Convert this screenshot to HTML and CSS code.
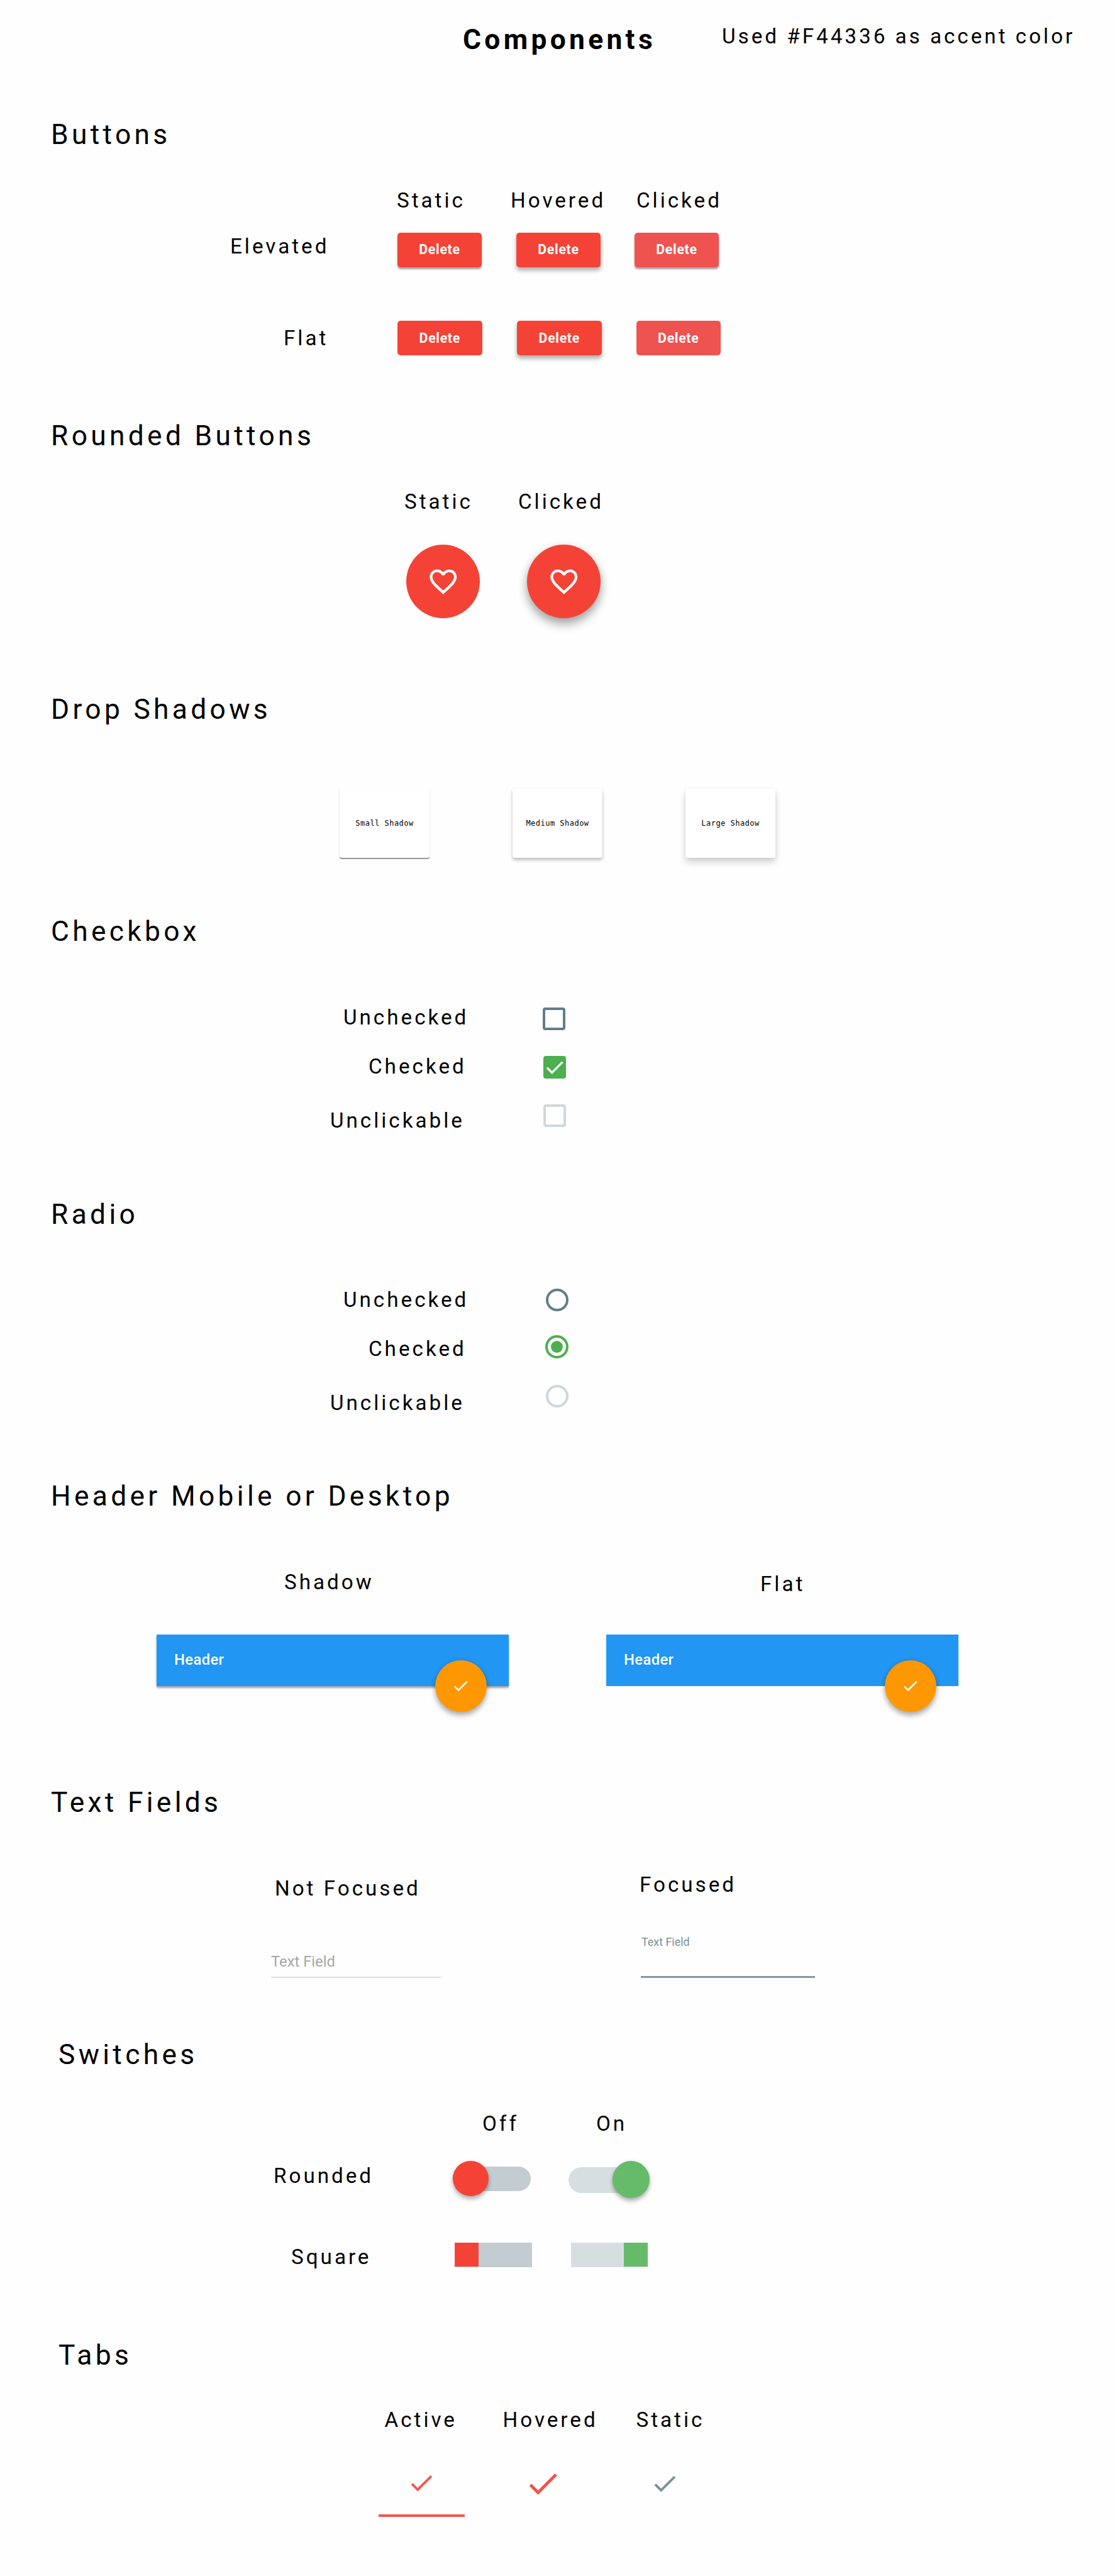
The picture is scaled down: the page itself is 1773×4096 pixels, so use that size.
FILE: index.html
```html
<!DOCTYPE html>
<html lang="en">
<head>
<meta charset="utf-8">
<title>Components</title>
<link rel="stylesheet" href="styles.css">
</head>
<body>
<svg class="sprite" aria-hidden="true">
  <symbol id="check" viewBox="0 0 24 24"><path d="M9 16.17L4.83 12l-1.42 1.41L9 19 21 7l-1.41-1.41z"/></symbol>
  <symbol id="heart" viewBox="0 0 24 24"><path d="M16.5 3c-1.74 0-3.41.81-4.5 2.09C10.91 3.81 9.24 3 7.5 3 4.42 3 2 5.42 2 8.5c0 3.78 3.4 6.86 8.55 11.54L12 21.35l1.45-1.32C18.6 15.36 22 12.28 22 8.5 22 5.42 19.58 3 16.5 3zm-4.4 15.55l-.1.1-.1-.1C7.14 14.24 4 11.39 4 8.5 4 6.5 5.5 5 7.5 5c1.54 0 3.04.99 3.57 2.36h1.87C13.46 5.99 14.96 5 16.5 5c2 0 3.5 1.5 3.5 3.5 0 2.89-3.14 5.74-7.9 10.05z"/></symbol>
</svg>

<header class="page-head">
  <h1 class="title">Components</h1>
  <p class="label note">Used #F44336 as accent color</p>
</header>

<section class="section buttons">
  <h2 class="heading">Buttons</h2>
  <div class="grid">
    <span></span>
    <span class="label">Static</span>
    <span class="label">Hovered</span>
    <span class="label">Clicked</span>
    <span class="label elevated-label">Elevated</span>
    <button class="btn elevated">Delete</button>
    <button class="btn elevated hovered">Delete</button>
    <button class="btn elevated clicked">Delete</button>
    <span class="label flat-label">Flat</span>
    <button class="btn flat">Delete</button>
    <button class="btn flat hovered">Delete</button>
    <button class="btn flat clicked">Delete</button>
  </div>
</section>

<section class="section rounded">
  <h2 class="heading">Rounded Buttons</h2>
  <div class="grid">
    <span class="label">Static</span>
    <span class="label">Clicked</span>
    <button class="round"><svg class="heart"><use href="#heart"/></svg></button>
    <button class="round raised"><svg class="heart"><use href="#heart"/></svg></button>
  </div>
</section>

<section class="section shadows">
  <h2 class="heading">Drop Shadows</h2>
  <div class="cards">
    <div class="card small">Small Shadow</div>
    <div class="card medium">Medium Shadow</div>
    <div class="card large">Large Shadow</div>
  </div>
</section>

<section class="section options checkboxes">
  <h2 class="heading">Checkbox</h2>
  <div class="grid">
    <span class="label unchecked-label">Unchecked</span>
    <span class="box"></span>
    <span class="label checked-label">Checked</span>
    <span class="box checked"><svg class="tick" viewBox="3 3 18 18"><path d="M6 12.4l3.9 3.9 8.4-8.5"/></svg></span>
    <span class="label unclickable-label">Unclickable</span>
    <span class="box disabled"></span>
  </div>
</section>

<section class="section options radios">
  <h2 class="heading">Radio</h2>
  <div class="grid">
    <span class="label unchecked-label">Unchecked</span>
    <span class="radio"></span>
    <span class="label checked-label">Checked</span>
    <span class="radio checked"></span>
    <span class="label unclickable-label">Unclickable</span>
    <span class="radio disabled"></span>
  </div>
</section>

<section class="section headers">
  <h2 class="heading">Header Mobile or Desktop</h2>
  <div class="grid">
    <span class="label shadow-label">Shadow</span>
    <span class="label flat-label">Flat</span>
    <div class="bar shadowed">Header<button class="fab"><svg class="fab-icon"><use href="#check"/></svg></button></div>
    <div class="bar">Header<button class="fab"><svg class="fab-icon"><use href="#check"/></svg></button></div>
  </div>
</section>

<section class="section fields">
  <h2 class="heading">Text Fields</h2>
  <div class="grid">
    <span class="label blurred-label">Not Focused</span>
    <span class="label focused-label">Focused</span>
    <div class="field">Text Field</div>
    <div class="field focused">Text Field</div>
  </div>
</section>

<section class="section inset switches">
  <h2 class="heading">Switches</h2>
  <div class="grid">
    <span></span>
    <span class="label off-label">Off</span>
    <span class="label on-label">On</span>
    <span class="label rounded-label">Rounded</span>
    <span class="pill off"><i class="thumb"></i></span>
    <span class="pill on"><i class="thumb"></i></span>
    <span class="label square-label">Square</span>
    <span class="slab off"><i class="thumb"></i></span>
    <span class="slab on"><i class="thumb"></i></span>
  </div>
</section>

<section class="section inset tabs">
  <h2 class="heading">Tabs</h2>
  <div class="grid">
    <span class="label">Active</span>
    <span class="label">Hovered</span>
    <span class="label">Static</span>
    <span class="tab active"><svg><use href="#check"/></svg></span>
    <span class="tab hovered"><svg><use href="#check"/></svg></span>
    <span class="tab"><svg><use href="#check"/></svg></span>
  </div>
</section>
</body>
</html>
```

FILE: styles.css
```css
* { box-sizing: border-box; }

body {
  margin: 0;
  width: 1773px;
  height: 4096px;
  overflow: hidden;
  background: #fefefe;
  color: #000;
  font-family: Roboto, "Liberation Sans", sans-serif;
}

.sprite { display: none; }

button {
  padding: 0;
  border: 0;
  font-family: inherit;
}

/* Type */
.title, .heading, .label { margin: 0; white-space: nowrap; }
.title, .heading {
  font-size: 44.33px;
  line-height: 52px;
  letter-spacing: 5.32px;
}
.title { font-weight: 700; }
.heading { font-weight: 400; padding-left: 81px; }
.label {
  padding-left: 1px;
  font-size: 33.24px;
  line-height: 41px;
  letter-spacing: 3.98px;
}

/* Sections */
.page-head {
  display: flex;
  height: 188px;
  padding: 37px 0 0 736px;
}
.page-head .title { width: 411px; }

.section { display: flex; flex-direction: column; }
.inset .heading { padding-left: 93px; }
.grid { display: grid; align-items: start; justify-items: start; }

/* Buttons */
.buttons { height: 479px; }
.buttons .grid {
  padding: 58px 0 0 365px;
  grid-template-columns: 265px 181px 200px 200px;
  grid-template-rows: 72px 140px 60px;
}
.elevated-label { margin-top: 1px; }
.buttons .flat-label { margin: 7px 0 0 85px; }
.btn {
  width: 134px;
  height: 54.5px;
  border-radius: 5px;
  background: #f44336;
  color: #fff;
  font-size: 21.3px;
  font-weight: 700;
  line-height: 54px;
  letter-spacing: 0.7px;
  margin-left: 2px;
}
.btn.flat { width: 134.6px; height: 55px; }
.btn.elevated { box-shadow: 0 3px 3px rgba(0, 0, 0, 0.36); }
.btn.hovered { margin-left: 10px; box-shadow: 0 5px 7px rgba(0, 0, 0, 0.32); }
.btn.flat.hovered { margin-left: 11px; }
.btn.clicked { margin-left: -2px; background: #ef5350; }
.btn.flat.clicked { margin-left: 0.5px; }

/* Rounded buttons */
.rounded { height: 435px; }
.rounded .grid {
  padding: 58px 0 0 642px;
  grid-template-columns: 181px 180px;
  grid-template-rows: 89px 117px;
}
.round {
  display: grid;
  place-items: center;
  width: 117px;
  height: 117px;
  margin-left: 4px;
  border-radius: 50%;
  background: #f44336;
}
.round.raised {
  margin-left: 15px;
  box-shadow: 0 10px 16px rgba(0, 0, 0, 0.3), 0 2px 14px rgba(0, 0, 0, 0.12);
}
.heart { width: 51.5px; height: 51.5px; fill: #fff; }

/* Drop shadows */
.shadows { height: 353px; }
.cards { display: flex; gap: 132px; padding: 100px 0 0 540px; }
.card {
  width: 143px;
  height: 110px;
  border-radius: 3px;
  background: #fff;
  font-family: "DejaVu Sans Mono", "Liberation Mono", monospace;
  font-size: 12px;
  line-height: 111px;
  letter-spacing: 0.48px;
  text-align: center;
}
.card.small { box-shadow: 0 1.5px 1px rgba(0, 0, 0, 0.38), 0 1px 2px rgba(0, 0, 0, 0.12); }
.card.medium { box-shadow: 0 4px 5px rgba(0, 0, 0, 0.2), 0 1px 4px rgba(0, 0, 0, 0.1); }
.card.large { box-shadow: 0 7px 11px rgba(0, 0, 0, 0.18), 0 0 5px rgba(0, 0, 0, 0.06); }

/* Checkbox and radio */
.options .grid {
  padding: 90px 0 0 524px;
  grid-template-columns: 340px 40px;
}
.checkboxes { height: 450px; }
.checkboxes .grid { grid-template-rows: 78px 86px 40px; }
.radios { height: 448px; }
.radios .grid { padding-top: 89px; grid-template-rows: 78px 86px 40px; }
.unchecked-label { margin-left: 21px; }
.checked-label { margin-left: 61px; }

.box {
  width: 36px;
  height: 36px;
  margin: 4.5px 0 0 -1px;
  border: 4px solid #607d8b;
  border-radius: 4px;
}
.box.checked { margin: 4px 0 0; border: 0; background: #4caf50; }
.box.disabled { margin: -5px 0 0; border-color: #cfd8dc; }
.tick {
  display: block;
  width: 36px;
  height: 36px;
  fill: none;
  stroke: #fff;
  stroke-width: 1.7;
}

.radio {
  display: grid;
  place-items: center;
  width: 36px;
  height: 36px;
  margin: 2.7px 0 0 3.8px;
  border: 4px solid #607d8b;
  border-radius: 50%;
}
.radio.checked {
  width: 37px;
  height: 37px;
  margin: -1px 0 0 3.3px;
  border-color: #4caf50;
}
.radio.checked::before {
  content: "";
  width: 19px;
  height: 19px;
  border-radius: 50%;
  background: #4caf50;
}
.radio.disabled { margin-top: -8.5px; border-color: #cfd8dc; }

/* Header bars */
.headers { height: 487px; }
.headers .grid {
  padding: 90px 0 0 249px;
  grid-template-columns: 715px 560px;
  grid-template-rows: 104px 82px;
}
.shadow-label { margin-left: 202px; }
.headers .flat-label { margin: 3px 0 0 244px; }
.bar {
  position: relative;
  width: 560px;
  height: 82px;
  padding-left: 28px;
  background: #2196f3;
  color: #fff;
  font-size: 23.8px;
  font-weight: 500;
  line-height: 81px;
  letter-spacing: 0.4px;
}
.bar.shadowed { box-shadow: 0 3px 3px rgba(0, 0, 0, 0.36); }
/* The action button straddles the lower edge of the bar */
.fab {
  position: absolute;
  right: 35px;
  bottom: -41px;
  display: grid;
  place-items: center;
  width: 82px;
  height: 82px;
  border-radius: 50%;
  background: #ff9800;
  box-shadow: 0 6px 9px rgba(0, 0, 0, 0.28), 0 1px 8px rgba(0, 0, 0, 0.12);
}
.fab-icon { width: 29.3px; height: 29.3px; fill: #fff; }

/* Text fields */
.fields { height: 401px; }
.fields .grid {
  padding: 84px 0 0 431px;
  grid-template-columns: 588px 277px;
  grid-template-rows: 95px 80px;
}
.blurred-label { margin: 6px 0 0 5px; }
.focused-label { margin-left: -3px; }
.field {
  width: 271px;
  height: 74px;
  padding-top: 34px;
  border-bottom: 2px solid #e0e0e0;
  color: #a6a6a6;
  font-size: 23.8px;
  line-height: 28px;
}
.field.focused {
  width: 277px;
  padding: 3px 0 0 1px;
  border-bottom: 3px solid #8599a3;
  color: #78909c;
  font-size: 17.9px;
}

/* Switches */
.switches { height: 478px; }
.switches .grid {
  padding: 63px 0 0 434px;
  grid-template-columns: 286px 184px 140px;
  grid-template-rows: 79px 131px 40px;
}
.off-label { margin-left: 46px; }
.on-label { margin-left: 43px; }
.rounded-label { margin-top: 4px; }
.square-label { margin: 2px 0 0 28px; }
.pill, .slab { display: flex; }
.pill { border-radius: 21px; }
.pill.off {
  width: 120px;
  height: 39px;
  margin: 10px 0 0 4px;
  background: #c3ccd1;
}
.pill.on {
  width: 125px;
  height: 41px;
  margin-top: 10.6px;
  justify-content: flex-end;
  background: #d7dee1;
}
.pill .thumb {
  flex: none;
  border-radius: 50%;
  box-shadow: 0 5px 7px rgba(0, 0, 0, 0.28), 0 0 5px rgba(0, 0, 0, 0.1);
}
.pill.off .thumb { width: 56.6px; height: 56.6px; margin: -9.5px 0 0 -3.8px; background: #f44336; }
.pill.on .thumb { width: 59px; height: 59px; margin: -10px -4.4px 0 0; background: #66bb6a; }
.slab { height: 39px; }
.slab.off { width: 123px; margin-left: 3px; background: #c3ccd1; }
.slab.on { width: 122px; margin-left: 4px; justify-content: flex-end; background: #d7dee1; }
.slab .thumb { width: 37.6px; height: 37.6px; background: #f44336; }
.slab.on .thumb { background: #66bb6a; }

/* Tabs */
.tabs { height: 377px; }
.tabs .grid {
  padding: 55.5px 0 0 601.5px;
  grid-template-columns: 197px 212px 140px;
  grid-template-rows: 82px 94px;
}
.tabs .label:first-child { margin-left: 9px; }
.tab {
  width: 137px;
  height: 93.5px;
  padding: 16px 0 0 45px;
  color: #78909c;
}
.tab svg { display: block; width: 46px; height: 46px; fill: currentColor; }
.tab:last-child { padding: 17px 0 0 23px; }
.tab.active { border-bottom: 4px solid #f5554d; color: #f5554d; }
.tab.hovered { padding: 10px 0 0 34px; color: #ef5350; }
.tab.hovered svg { width: 60.4px; height: 60.4px; }
```
